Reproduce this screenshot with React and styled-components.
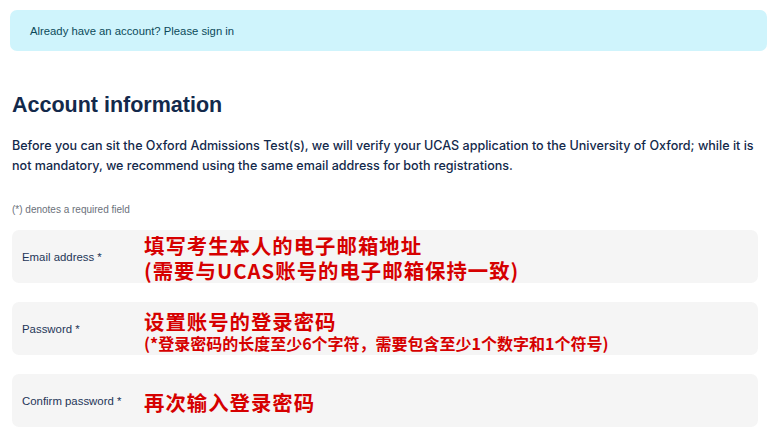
import React from 'react'
import styled, { createGlobalStyle } from 'styled-components'

const GlobalStyle = createGlobalStyle`
  html, body {
    margin: 0;
    padding: 0;
    background: #ffffff;
  }
  body {
    font-family: "Liberation Sans", Arial, sans-serif;
  }
`

const Page = styled.div`
  width: 773px;
  padding: 10px 6px 0 10px;
  box-sizing: border-box;
`

const Banner = styled.div`
  background: #cff4fc;
  border-radius: 7px;
  height: 41px;
  padding: 0 20px;
  display: flex;
  align-items: center;
  color: #0b4a5a;
  font-size: 11.3px;
`

const Section = styled.section`
  padding: 0 0 0 2px;
`

const Title = styled.h1`
  margin: 40px 0 0;
  font-size: 21.5px;
  font-weight: 700;
  line-height: 28px;
  color: #13294b;
`

const Intro = styled.p`
  margin: 17px 0 0;
  font-family: Inter, "Liberation Sans", sans-serif;
  font-size: 12.55px;
  line-height: 20px;
  font-weight: 500;
  color: #13294b;
  width: 746px;
`

const Hint = styled.div`
  margin-top: 28px;
  font-size: 10px;
  color: #6b717a;
`

const Fields = styled.div`
  margin-top: 15px;
  display: flex;
  flex-direction: column;
  gap: 19px;
`

const Field = styled.div`
  background: #f5f5f5;
  border-radius: 7px;
  height: 53px;
  display: flex;
  align-items: center;
  padding-left: 10px;
  width: 746px;
  box-sizing: border-box;
`

const Label = styled.div`
  width: 122px;
  flex-shrink: 0;
  font-size: 11.4px;
  color: #1e3558;
`

const Note = styled.div`
  display: flex;
  flex-direction: column;
  margin-top: 3px;
  color: #d60000;
  font-family: "Noto Sans CJK SC", "Noto Sans", sans-serif;
  font-weight: 700;
`

const NoteLine = styled.div`
  font-size: ${({ small }) => (small ? '16px' : '20.4px')};
  line-height: ${({ small }) => (small ? '18px' : '25px')};
  letter-spacing: ${({ small }) => (small ? '0' : '1px')};
  white-space: nowrap;
`

const fields = [
  {
    label: 'Email address *',
    notes: [
      { text: '填写考生本人的电子邮箱地址' },
      { text: '(需要与UCAS账号的电子邮箱保持一致)' },
    ],
  },
  {
    label: 'Password *',
    notes: [
      { text: '设置账号的登录密码' },
      { text: '(*登录密码的长度至少6个字符，需要包含至少1个数字和1个符号)', small: true },
    ],
  },
  {
    label: 'Confirm password *',
    notes: [{ text: '再次输入登录密码' }],
  },
]

const App = () => {
  return (
    <Page>
      <GlobalStyle />
      <Banner>Already have an account? Please sign in</Banner>
      <Section>
        <Title>Account information</Title>
        <Intro>
          Before you can sit the Oxford Admissions Test(s), we will verify your UCAS application to the
          University of Oxford; while it is not mandatory, we recommend using the same email address for
          both registrations.
        </Intro>
        <Hint>(*) denotes a required field</Hint>
        <Fields>
          {fields.map((f) => (
            <Field key={f.label}>
              <Label>{f.label}</Label>
              <Note>
                {f.notes.map((n) => (
                  <NoteLine key={n.text} small={n.small}>
                    {n.text}
                  </NoteLine>
                ))}
              </Note>
            </Field>
          ))}
        </Fields>
      </Section>
    </Page>
  )
}

export default App
